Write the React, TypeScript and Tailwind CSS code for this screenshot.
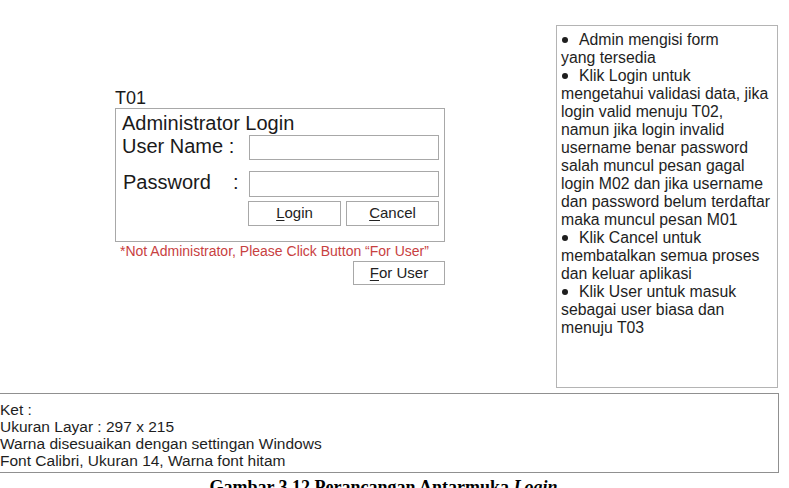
import React from 'react';

const notes: { text: string; bullet?: boolean }[] = [
  { text: 'Admin mengisi form', bullet: true },
  { text: 'yang tersedia' },
  { text: 'Klik Login untuk', bullet: true },
  { text: 'mengetahui validasi data, jika' },
  { text: 'login valid menuju T02,' },
  { text: 'namun jika login invalid' },
  { text: 'username benar password' },
  { text: 'salah muncul pesan gagal' },
  { text: 'login M02 dan jika username' },
  { text: 'dan password belum terdaftar' },
  { text: 'maka muncul pesan M01' },
  { text: 'Klik Cancel untuk', bullet: true },
  { text: 'membatalkan semua proses' },
  { text: 'dan keluar aplikasi' },
  { text: 'Klik User untuk masuk', bullet: true },
  { text: 'sebagai user biasa dan' },
  { text: 'menuju T03' },
];

const ket = [
  'Ket :',
  'Ukuran Layar : 297 x 215',
  'Warna disesuaikan dengan settingan Windows',
  'Font Calibri, Ukuran 14, Warna font hitam',
];

// Button with an underlined access key (first letter)
const Btn: React.FC<{ label: string; className?: string }> = ({ label, className }) => (
  <div
    className={`flex items-center justify-center border border-[#a8a8a8] bg-white text-[15px] text-[#222] ${className ?? ''}`}
  >
    <span className="underline underline-offset-2 decoration-1">{label[0]}</span>
    {label.slice(1)}
  </div>
);

export default function App() {
  return (
    <div className="relative w-[789px] h-[488px] overflow-hidden bg-white text-[#1a1a1a] font-['Liberation_Sans',Arial,sans-serif]">
      <div className="flex h-[393px]">
        {/* login form mockup */}
        <div className="ml-[115px] pt-[88px] w-[330px]">
          <div className="text-[18px] leading-[20px]">T01</div>
          <div className="h-[134px] border border-[#a8a8a8] pl-[6px] pt-[3px]">
            <div className="text-[20px] leading-[22px]">Administrator Login</div>
            <div className="flex items-center">
              <div className="w-[127px] text-[20px] -mt-[3px]">User Name :</div>
              <div className="w-[190px] h-[25px] border border-[#a8a8a8]" />
            </div>
            <div className="mt-[9px] flex items-center">
              <div className="w-[127px] flex text-[20px] pl-[1px] -mt-[3px]">
                <span className="w-[110px]">Password</span>
                <span>:</span>
              </div>
              <div className="w-[190px] h-[26px] border border-[#a8a8a8]" />
            </div>
            <div className="mt-[4px] ml-[126px] flex gap-[5px]">
              <Btn label="Login" className="w-[93px] h-[25px]" />
              <Btn label="Cancel" className="w-[93px] h-[25px]" />
            </div>
          </div>
          <div className="mt-[2px] pl-[5px] text-[14px] leading-[15px] text-[#c8413f] whitespace-nowrap">
            *Not Administrator, Please Click Button “For User”
          </div>
          <div className="flex justify-end mt-[2px]">
            <Btn label="For User" className="w-[92px] h-[24px]" />
          </div>
        </div>

        {/* keterangan alur */}
        <div className="ml-[111px] mt-[25px] w-[222px] h-[363px] border border-[#b4b4b4] pl-[4px] pt-[5px] text-[15.8px] leading-[18px] text-[#1e1e1e]">
          {notes.map((n, i) => (
            <div key={i} className="flex items-center whitespace-nowrap">
              {n.bullet && (
                <span className="w-[18px] flex items-center">
                  <span className="ml-[1px] w-[6px] h-[6px] rounded-full bg-[#1e1e1e]" />
                </span>
              )}
              {n.text}
            </div>
          ))}
        </div>
      </div>

      <div className="-ml-[1px] w-[780px] h-[80px] border border-[#909090] pt-[7px] text-[15.5px] leading-[17px] text-[#1e1e1e]">
        {ket.map((t) => (
          <div key={t}>{t}</div>
        ))}
      </div>

      <div className="pt-[5px] text-center pr-[22px] font-['Liberation_Serif','Times_New_Roman',serif] font-bold text-[18px] leading-[18px] text-black whitespace-nowrap">
        Gambar 3.12 Perancangan Antarmuka <i>Login</i>
      </div>
    </div>
  );
}
